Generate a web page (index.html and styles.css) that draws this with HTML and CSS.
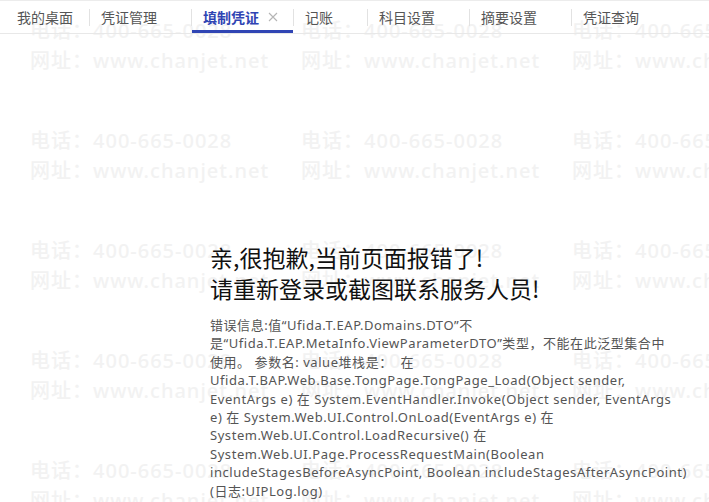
FILE: index.html
```html
<!DOCTYPE html>
<html lang="zh-CN">

<head>
    <meta charset="UTF-8">
    <meta name="viewport" content="width=device-width, initial-scale=1.0">
    <title>填制凭证</title>
    <link rel="stylesheet" href="styles.css">
</head>

<body>
    <!-- 水印 -->
    <div class="watermark">
        <div class="mark"><p>电话：400-665-0028</p><p>网址：www.chanjet.net</p></div>
        <div class="mark"><p>电话：400-665-0028</p><p>网址：www.chanjet.net</p></div>
        <div class="mark"><p>电话：400-665-0028</p><p>网址：www.chanjet.net</p></div>
        <div class="mark"><p>电话：400-665-0028</p><p>网址：www.chanjet.net</p></div>
        <div class="mark"><p>电话：400-665-0028</p><p>网址：www.chanjet.net</p></div>
        <div class="mark"><p>电话：400-665-0028</p><p>网址：www.chanjet.net</p></div>
        <div class="mark"><p>电话：400-665-0028</p><p>网址：www.chanjet.net</p></div>
        <div class="mark"><p>电话：400-665-0028</p><p>网址：www.chanjet.net</p></div>
        <div class="mark"><p>电话：400-665-0028</p><p>网址：www.chanjet.net</p></div>
        <div class="mark"><p>电话：400-665-0028</p><p>网址：www.chanjet.net</p></div>
        <div class="mark"><p>电话：400-665-0028</p><p>网址：www.chanjet.net</p></div>
        <div class="mark"><p>电话：400-665-0028</p><p>网址：www.chanjet.net</p></div>
        <div class="mark"><p>电话：400-665-0028</p><p>网址：www.chanjet.net</p></div>
        <div class="mark"><p>电话：400-665-0028</p><p>网址：www.chanjet.net</p></div>
        <div class="mark"><p>电话：400-665-0028</p><p>网址：www.chanjet.net</p></div>
    </div>

    <!-- 页签 -->
    <div class="tabs">
        <div class="tab first">我的桌面</div>
        <i class="sep"></i>
        <div class="tab">凭证管理<span class="close"></span></div>
        <i class="sep"></i>
        <div class="tab active">填制凭证<span class="close">
            <svg width="10" height="10" viewBox="0 0 10 10"><path d="M1 1L9 9M9 1L1 9" stroke="#b5b5b5" stroke-width="1.1" fill="none"/></svg>
        </span></div>
        <i class="sep"></i>
        <div class="tab">记账<span class="close"></span></div>
        <i class="sep"></i>
        <div class="tab">科目设置<span class="close"></span></div>
        <i class="sep"></i>
        <div class="tab">摘要设置<span class="close"></span></div>
        <i class="sep"></i>
        <div class="tab">凭证查询<span class="close"></span></div>
    </div>

    <!-- 错误信息 -->
    <div class="error">
        <h2>亲,很抱歉,当前页面报错了!<br>请重新登录或截图联系服务人员!</h2>
        <p class="detail">错误信息:值“Ufida.T.EAP.Domains.DTO”不<br>是“Ufida.T.EAP.MetaInfo.ViewParameterDTO”类型，不能在此泛型集合中<br>使用。 参数名: value堆栈是：&nbsp; 在<br>Ufida.T.BAP.Web.Base.TongPage.TongPage_Load(Object sender,<br>EventArgs e) 在 System.EventHandler.Invoke(Object sender, EventArgs<br>e) 在 System.Web.UI.Control.OnLoad(EventArgs e) 在<br>System.Web.UI.Control.LoadRecursive() 在<br>System.Web.UI.Page.ProcessRequestMain(Boolean<br>includeStagesBeforeAsyncPoint, Boolean includeStagesAfterAsyncPoint)<br>(日志:UIPLog.log)</p>
    </div>
</body>

</html>
```

FILE: styles.css
```css
html, body {
    margin: 0;
    height: 100%;
}

body {
    font-family: 'Noto Sans', 'Noto Sans CJK SC', sans-serif;
    background-color: #fff;
    color: #333;
    position: relative;
    overflow: hidden;
    border-top: 1px solid #ececec;
    box-sizing: border-box;
}

/* 水印 */
.watermark {
    position: absolute;
    top: 0;
    left: 0;
    right: 0;
    bottom: 0;
    padding: 15px 0 0 30px;
    display: grid;
    grid-template-columns: repeat(3, 271px);
    grid-auto-rows: 110px;
    overflow: hidden;
    pointer-events: none;
    z-index: 0;
}

.mark p {
    margin: 0;
    font-size: 20px;
    line-height: 30px;
    font-weight: 500;
    letter-spacing: 1px;
    color: #f2f2f2;
    white-space: nowrap;
}

/* 页签 */
.tabs {
    position: relative;
    z-index: 1;
    display: flex;
    align-items: center;
    height: 32px;
    border-bottom: 1px solid #e8e8e8;
}

.tab {
    display: flex;
    align-items: center;
    height: 32px;
    padding: 0 14px 0 11px;
    font-size: 14px;
    color: #555;
    box-sizing: border-box;
}

.tab.first {
    padding: 0 16px 0 17px;
}

.tab .close {
    display: flex;
    align-items: center;
    justify-content: center;
    width: 12px;
    height: 12px;
    margin-left: 8px;
}

.tab.active {
    color: #2f44b3;
    font-weight: 700;
    box-shadow: inset 0 -3px 0 #3045b4;
}

.sep {
    width: 1px;
    height: 17px;
    background-color: #e2e2e2;
}

/* 错误信息 */
.error {
    position: relative;
    z-index: 1;
    padding: 208px 0 0 210px;
    width: 496px;
}

.error h2 {
    margin: 0;
    font-family: 'Noto Sans CJK SC', sans-serif;
    font-size: 23px;
    font-weight: 400;
    line-height: 31px;
    color: #111;
}

.detail {
    margin: 12px 0 0;
    font-size: 13px;
    line-height: 18.4px;
    letter-spacing: 0.55px;
    color: #555;
}
```
